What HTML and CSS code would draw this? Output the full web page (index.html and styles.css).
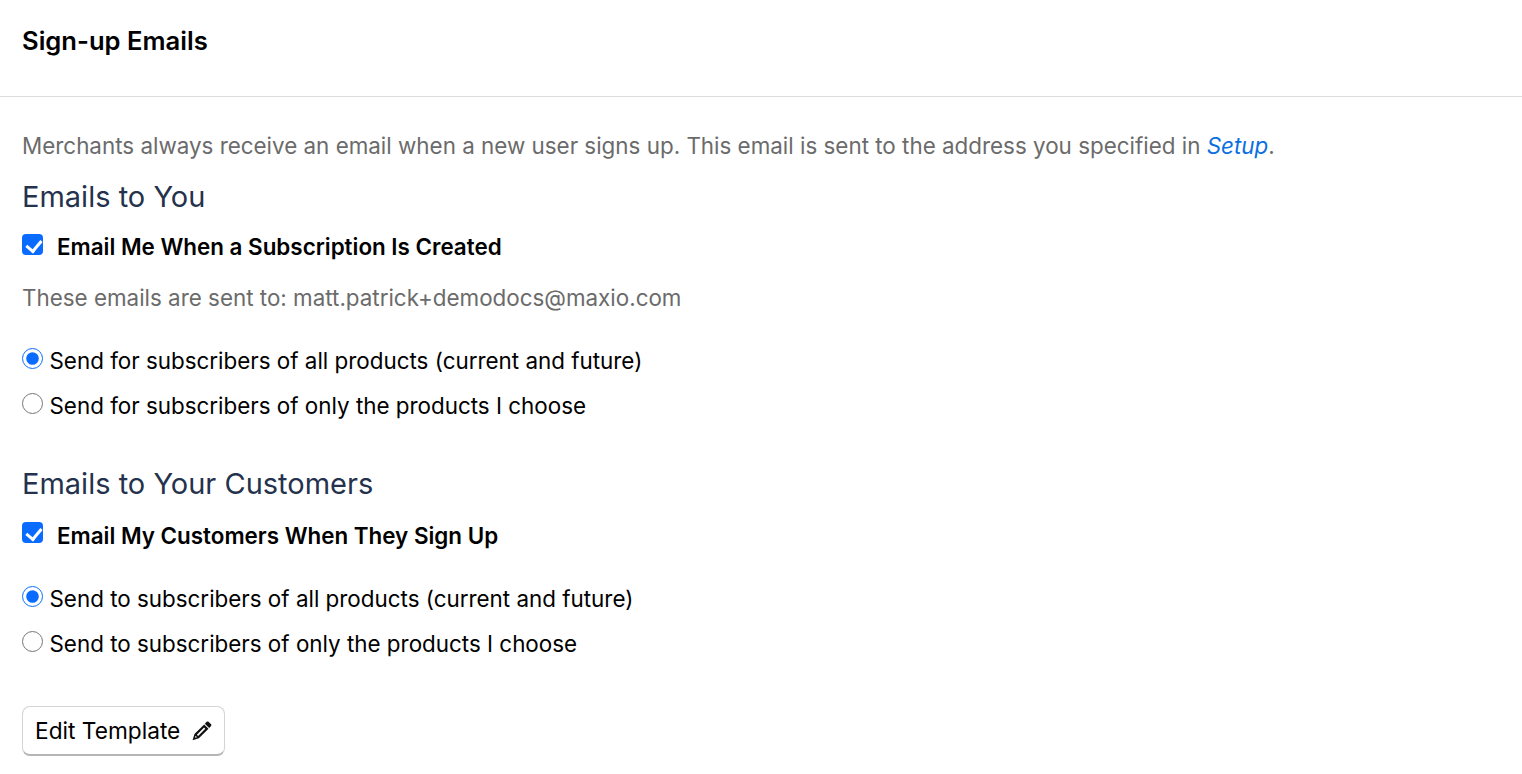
FILE: index.html
```html
<!DOCTYPE html>
<html lang="en">
<head>
  <meta charset="UTF-8">
  <title>Sign-up Emails</title>
  <link rel="stylesheet" href="styles.css">
</head>
<body>
  <header class="page-header">
    <h1>Sign-up Emails</h1>
  </header>

  <main class="content">
    <p class="intro">Merchants always receive an email when a new user signs up. This email is sent to the address you specified in <a href="#">Setup</a>.</p>

    <h2>Emails to You</h2>
    <label class="check-row">
      <input type="checkbox" checked>
      <span>Email Me When a Subscription Is Created</span>
    </label>
    <p class="sent-to">These emails are sent to: matt.patrick+demodocs@maxio.com</p>
    <div class="radio-group">
      <label class="radio-row"><input type="radio" name="you" checked> Send for subscribers of all products (current and future)</label>
      <label class="radio-row"><input type="radio" name="you"> Send for subscribers of only the products I choose</label>
    </div>

    <h2 class="customers">Emails to Your Customers</h2>
    <label class="check-row customers-check">
      <input type="checkbox" checked>
      <span>Email My Customers When They Sign Up</span>
    </label>
    <div class="radio-group">
      <label class="radio-row"><input type="radio" name="customers" checked> Send to subscribers of all products (current and future)</label>
      <label class="radio-row"><input type="radio" name="customers"> Send to subscribers of only the products I choose</label>
    </div>

    <button type="button" class="edit-button">
      Edit Template
      <svg width="20" height="20" viewBox="0 0 20 20" aria-hidden="true">
        <path fill-rule="evenodd" fill="#111" d="M15 .6c.5-.5 1.300-.5 1.800 0l2.600 2.600c.5.5.5 1.300 0 1.800l-1.900 1.900-4.400-4.400zM12.400 3.300 16.800 7.700 7 17.500 .6 19.400 2.500 13zM12.300 6.500 5 13.800 6.200 15 13.500 7.700zM3.700 14.800 3 17 5.200 16.300z"/>
      </svg>
    </button>
  </main>
</body>
</html>
```

FILE: styles.css
```css
* {
  margin: 0;
  padding: 0;
  box-sizing: border-box;
}

body {
  font-family: Inter, "Liberation Sans", sans-serif;
  background: #ffffff;
  color: #000000;
  font-size: 22.4px;
  line-height: 32px;
}

.page-header {
  height: 97px;
  padding: 24px 22px 0;
  border-bottom: 1px solid #dcdcdc;
}

h1 {
  font-size: 25.6px;
  font-weight: 600;
  line-height: 34px;
}

.content {
  padding: 33px 22px 0;
}

.intro,
.sent-to {
  color: #6b6b6b;
}

.intro a {
  color: #0b6fe0;
  font-style: italic;
  text-decoration: none;
}

h2 {
  font-size: 29px;
  font-weight: 400;
  line-height: 40px;
  color: #25324d;
  margin-top: 15px;
}

h2.customers {
  margin-top: 42px;
}

.check-row {
  display: flex;
  align-items: center;
  gap: 14px;
  font-weight: 600;
  margin-top: 14px;
}

.customers-check {
  margin-top: 15.5px;
}

.check-row input {
  appearance: none;
  position: relative;
  width: 21px;
  height: 21px;
  margin-top: -6px;
  background: #0a6cff;
  border-radius: 4px;
}

.check-row input::after {
  content: "";
  position: absolute;
  left: 7px;
  top: 3px;
  width: 7px;
  height: 12px;
  border: solid #ffffff;
  border-width: 0 3px 3px 0;
  transform: rotate(40deg);
}

.sent-to {
  margin-top: 19px;
}

.radio-group {
  margin-top: 31px;
  display: flex;
  flex-direction: column;
  gap: 13px;
}

.radio-row {
  display: flex;
  align-items: center;
  gap: 6.5px;
}

.radio-row input {
  width: 21px;
  height: 21px;
  accent-color: #0a6cff;
  margin-top: -5px;
}

.edit-button {
  display: flex;
  align-items: center;
  gap: 12px;
  width: 203px;
  height: 50px;
  margin-top: 46.5px;
  padding: 0 12px;
  font-family: inherit;
  font-size: 22.7px;
  white-space: nowrap;
  color: #000000;
  background: #ffffff;
  border: 1px solid #d4d4d4;
  border-bottom: 2px solid #b5b5b5;
  border-radius: 8px;
}
```
